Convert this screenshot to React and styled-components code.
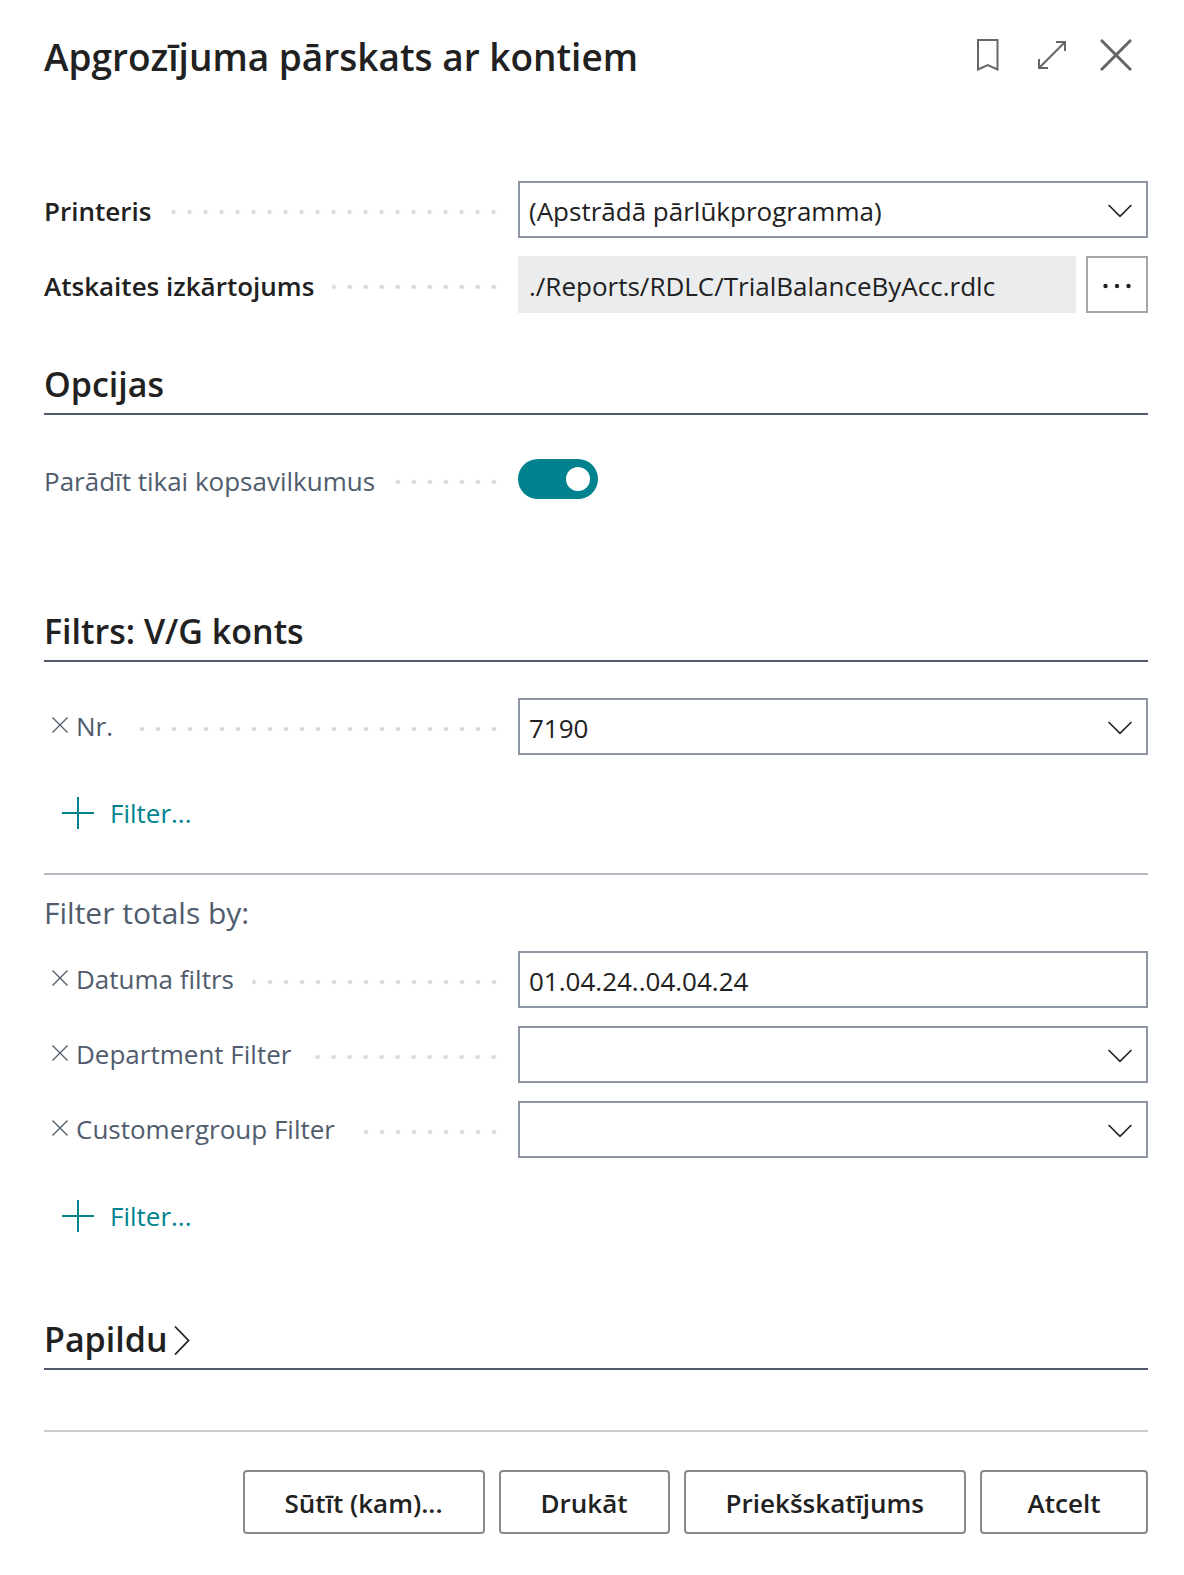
import React, { useState } from "react";
import styled, { createGlobalStyle } from "styled-components";

const GlobalStyle = createGlobalStyle`
  *, *::before, *::after { box-sizing: border-box; }
  body { margin: 0; background: #ffffff; }
  body, button, input, select {
    font-family: "Open Sans", "Noto Sans", sans-serif;
  }
`;

const ink = "#212121";
const muted = "#505c6d";
const teal = "#00838f";
const line = "#8d95a3";
const strongWeight = 600;

const Dialog = styled.main`
  min-height: 100vh;
  padding: 30px 36px 41px 44px;
  color: ${ink};
  font-size: 26px;
  line-height: 36px;
`;

const Header = styled.header`
  display: flex;
  align-items: center;
  justify-content: space-between;
  margin-bottom: 99px;
`;

const Title = styled.h1`
  margin: 0;
  padding: 3px 0 1px;
  font-size: 37px;
  line-height: 48px;
  font-weight: ${strongWeight};
`;

const Tools = styled.div`
  display: flex;
  gap: 24px;
  padding: 0 12px 2px 0;
`;

const IconButton = styled.button`
  display: flex;
  align-items: center;
  justify-content: center;
  width: 40px;
  height: 40px;
  padding: 0;
  border: 0;
  background: none;
  color: #666666;
`;

const Fields = styled.div`
  display: grid;
  gap: 18px;
`;

const Row = styled.div`
  display: grid;
  grid-template-columns: 474px minmax(0, 1fr);
  height: 57px;
`;

const LabelCell = styled.div`
  display: flex;
  align-items: center;
  min-width: 0;
  padding-right: 16px;
`;

const Label = styled.label`
  padding: ${(p) => (p.$filter ? "0 0 2px" : "2px 0 0")};
  color: ${(p) => (p.$strong ? ink : muted)};
  font-weight: ${(p) => (p.$strong ? strongWeight : 400)};
  white-space: nowrap;
`;

const Leader = styled.span`
  flex: 1;
  align-self: stretch;
  margin-left: 18px;
  background: radial-gradient(circle at 8px 31px, #d2d3d9 1px, transparent 3px) right top / 16px 100% repeat-x;
`;

const ClearButton = styled.button`
  display: flex;
  align-items: center;
  justify-content: center;
  width: 32px;
  height: 32px;
  padding: 0 0 3px;
  border: 0;
  background: none;
  color: ${muted};
`;

const SelectWrap = styled.div`
  display: grid;
  align-items: center;
  > * { grid-area: 1 / 1; }
  > svg { justify-self: end; margin: 2px 16px 0 0; pointer-events: none; }
`;

const Select = styled.select`
  appearance: none;
  width: 100%;
  height: 57px;
  padding: 2px 48px 0 9px;
  border: 2px solid ${line};
  border-radius: 0;
  background: #ffffff;
  color: ${ink};
  font-size: 26px;
`;

const TextInput = styled.input`
  width: 100%;
  min-width: 0;
  height: 57px;
  padding: 2px 9px 0;
  border: 2px solid ${(p) => (p.readOnly ? "#ebecee" : line)};
  border-radius: 0;
  background: ${(p) => (p.readOnly ? "#ebecee" : "#ffffff")};
  color: ${ink};
  font-size: 26px;
`;

const InputGroup = styled.div`
  display: flex;
  gap: 10px;
`;

const MoreButton = styled.button`
  display: flex;
  flex: none;
  align-items: center;
  justify-content: center;
  width: 62px;
  height: 57px;
  padding: 2px 0 0;
  border: 2px solid #a6a6a6;
  background: #ffffff;
  color: ${ink};
`;

const Section = styled.section`
  margin-top: ${(p) => p.$top}px;
`;

const Heading = styled.h2`
  margin: 0 0 36px;
  padding-bottom: 5px;
  border-bottom: 2px solid ${muted};
  font-size: 34px;
  line-height: 48px;
  font-weight: ${strongWeight};
`;

const Disclosure = styled.button`
  display: flex;
  align-items: center;
  gap: 6px;
  padding: 0;
  border: 0;
  background: none;
  color: inherit;
  font-size: inherit;
  font-weight: inherit;
  line-height: inherit;
  > svg { margin-top: 2px; }
`;

const SwitchWrap = styled.div`
  padding-top: 8px;
`;

const Switch = styled.input`
  appearance: none;
  display: flex;
  align-items: center;
  justify-content: ${(p) => (p.checked ? "flex-end" : "flex-start")};
  width: 80px;
  height: 40px;
  margin: 0;
  padding: 0 8px;
  border-radius: 20px;
  background: ${(p) => (p.checked ? teal : line)};
  &::before {
    content: "";
    width: 24px;
    height: 24px;
    border-radius: 50%;
    background: #ffffff;
  }
`;

const AddFilter = styled.button`
  display: flex;
  align-items: center;
  gap: 16px;
  margin: 40px 0 0 18px;
  padding: 0;
  border: 0;
  background: none;
  color: ${teal};
  font-size: 26px;
  line-height: 36px;
`;

const Divider = styled.hr`
  height: 2px;
  margin: ${(p) => p.$top}px 0 0;
  border: 0;
  background: ${(p) => p.$color};
`;

const SubHeading = styled.h3`
  margin: 18px 0;
  color: ${muted};
  font-size: 30px;
  line-height: 40px;
  font-weight: 400;
`;

const Footer = styled.footer`
  display: flex;
  justify-content: flex-end;
  gap: 14px;
  margin-top: 38px;
`;

const ActionButton = styled.button`
  min-width: 168px;
  height: 64px;
  padding: 1px 40px 0;
  border: 2px solid #8a8a8a;
  border-radius: 4px;
  background: #ffffff;
  color: ${ink};
  font-size: 26px;
  line-height: 36px;
  font-weight: ${strongWeight};
`;

const stroke = { fill: "none", stroke: "currentColor" };

const BookmarkIcon = () => (
  <svg width="22" height="32" viewBox="0 0 22 32" strokeWidth="2" {...stroke} aria-hidden="true">
    <path d="M1 1H20.5V30.5L10.8 26L1 30.5Z" />
  </svg>
);

const ExpandIcon = () => (
  <svg width="30" height="30" viewBox="0 0 30 30" strokeWidth="2" {...stroke} aria-hidden="true">
    <path d="M19 2H28V11M28 2L2 28M2 19V28H11" />
  </svg>
);

const CloseIcon = () => (
  <svg width="32" height="32" viewBox="0 0 32 32" strokeWidth="3" {...stroke} aria-hidden="true">
    <path d="M1 1L31 31M31 1L1 31" />
  </svg>
);

const ClearIcon = () => (
  <svg width="16" height="16" viewBox="0 0 16 16" strokeWidth="1.3" {...stroke} aria-hidden="true">
    <path d="M0.5 0.5L15.5 15.5M15.5 0.5L0.5 15.5" />
  </svg>
);

const ChevronDown = () => (
  <svg width="24" height="14" viewBox="0 0 24 14" strokeWidth="1.6" {...stroke} color={ink} aria-hidden="true">
    <path d="M0.6 1L12 12.4L23.4 1" />
  </svg>
);

const ChevronRight = () => (
  <svg width="16" height="30" viewBox="0 0 16 30" strokeWidth="1.8" {...stroke} aria-hidden="true">
    <path d="M1 1.5L14.5 15.5L1 29.5" />
  </svg>
);

const PlusIcon = () => (
  <svg width="32" height="32" viewBox="0 0 32 32" strokeWidth="2" {...stroke} aria-hidden="true">
    <path d="M16 0V32M0 16H32" />
  </svg>
);

const DotsIcon = () => (
  <svg width="30" height="6" viewBox="0 0 30 6" fill="currentColor" aria-hidden="true">
    <circle cx="3.5" cy="3" r="2.2" />
    <circle cx="15" cy="3" r="2.2" />
    <circle cx="26.5" cy="3" r="2.2" />
  </svg>
);

function Field({ id, label, strong, filter, children }) {
  return (
    <Row>
      <LabelCell>
        {filter && (
          <ClearButton type="button" aria-label={`${label} ×`}>
            <ClearIcon />
          </ClearButton>
        )}
        <Label htmlFor={id} $strong={strong} $filter={filter}>
          {label}
        </Label>
        <Leader />
      </LabelCell>
      {children}
    </Row>
  );
}

function Dropdown({ id, value = "" }) {
  return (
    <SelectWrap>
      <Select id={id} defaultValue={value}>
        <option value={value}>{value}</option>
      </Select>
      <ChevronDown />
    </SelectWrap>
  );
}

function AddFilterButton() {
  return (
    <AddFilter type="button">
      <PlusIcon />
      Filter...
    </AddFilter>
  );
}

const actions = ["Sūtīt (kam)...", "Drukāt", "Priekšskatījums", "Atcelt"];

export default function App() {
  const [totalsOnly, setTotalsOnly] = useState(true);

  return (
    <Dialog>
      <GlobalStyle />
      <Header>
        <Title>Apgrozījuma pārskats ar kontiem</Title>
        <Tools>
          <IconButton type="button" aria-label="Bookmark"><BookmarkIcon /></IconButton>
          <IconButton type="button" aria-label="Expand"><ExpandIcon /></IconButton>
          <IconButton type="button" aria-label="Close"><CloseIcon /></IconButton>
        </Tools>
      </Header>

      <Fields>
        <Field id="printer" label="Printeris" strong>
          <Dropdown id="printer" value="(Apstrādā pārlūkprogramma)" />
        </Field>
        <Field id="layout" label="Atskaites izkārtojums" strong>
          <InputGroup>
            <TextInput id="layout" readOnly value="./Reports/RDLC/TrialBalanceByAcc.rdlc" />
            <MoreButton type="button" aria-label="More"><DotsIcon /></MoreButton>
          </InputGroup>
        </Field>
      </Fields>

      <Section $top={47}>
        <Heading>Opcijas</Heading>
        <Field id="totals" label="Parādīt tikai kopsavilkumus">
          <SwitchWrap>
            <Switch
              id="totals"
              type="checkbox"
              role="switch"
              checked={totalsOnly}
              onChange={(e) => setTotalsOnly(e.target.checked)}
            />
          </SwitchWrap>
        </Field>
      </Section>

      <Section $top={99}>
        <Heading>Filtrs: V/G konts</Heading>
        <Field id="number" label="Nr." filter>
          <Dropdown id="number" value="7190" />
        </Field>
        <AddFilterButton />
        <Divider $top={42} $color="#b5bac2" />
        <SubHeading>Filter totals by:</SubHeading>
        <Fields>
          <Field id="date" label="Datuma filtrs" filter>
            <TextInput id="date" defaultValue="01.04.24..04.04.24" />
          </Field>
          <Field id="department" label="Department Filter" filter>
            <Dropdown id="department" />
          </Field>
          <Field id="customergroup" label="Customergroup Filter" filter>
            <Dropdown id="customergroup" />
          </Field>
        </Fields>
        <AddFilterButton />
      </Section>

      <Section $top={81}>
        <Heading>
          <Disclosure type="button" aria-expanded="false">
            Papildu
            <ChevronRight />
          </Disclosure>
        </Heading>
      </Section>

      <Divider $top={60} $color="#cccccc" />
      <Footer>
        {actions.map((name) => (
          <ActionButton key={name} type="button">{name}</ActionButton>
        ))}
      </Footer>
    </Dialog>
  );
}
